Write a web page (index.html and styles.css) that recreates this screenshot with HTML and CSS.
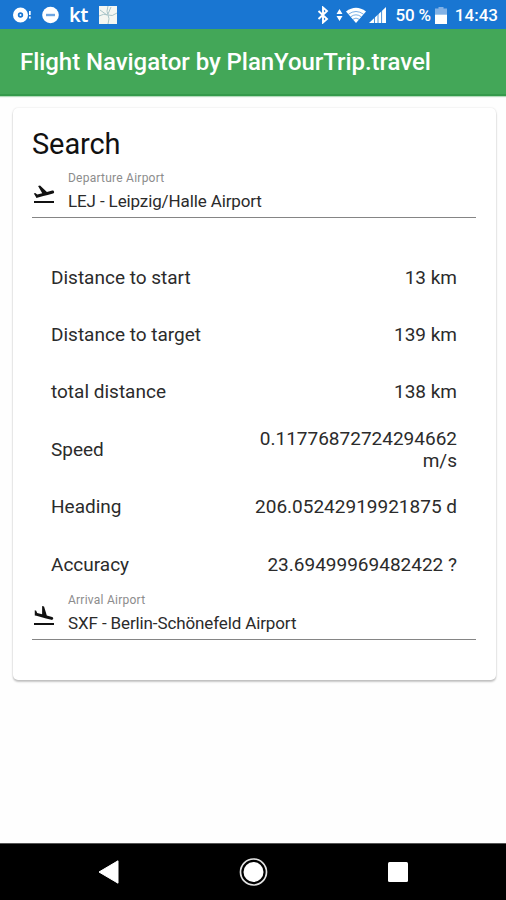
FILE: index.html
```html
<!DOCTYPE html>
<html lang="en">
<head>
  <meta charset="UTF-8" />
  <meta name="viewport" content="width=device-width, initial-scale=1" />
  <title>Flight Navigator</title>
  <link rel="stylesheet" href="styles.css">
</head>
<body>
  <div class="status-bar">
    <div class="status-left">
      <svg width="20" height="18" viewBox="0 0 20 18" fill="#fff">
        <path fill-rule="evenodd" d="M7.500 1.500a7.500 7.500 0 1 0 0 15a7.500 7.500 0 1 0 0-15zM7.500 6.300a2.700 2.700 0 1 1 0 5.400a2.700 2.700 0 1 1 0-5.400z" />
        <circle cx="7.500" cy="9" r="1" />
        <path d="M16 5h1.700v4H16zM16 10.500h1.700v2H16z" />
      </svg>
      <svg width="18" height="18" viewBox="0 0 18 18">
        <circle cx="8.500" cy="9" r="8.300" fill="#fff" />
        <path d="M4 9h9" stroke="#6ea6e2" stroke-width="2.400" />
      </svg>
      <span class="kt">kt</span>
      <svg width="18" height="18" viewBox="0 0 18 18">
        <path d="M0 0h18v18H0z" fill="#f4f6f2" />
        <path d="M0 10q5-3 9-1t9-2M9 0q-2 6 0 9t0 9M12 1l-3 7M1 4l7 5" fill="none" stroke="#a8c4c8" stroke-width="1" />
      </svg>
    </div>
    <div class="status-right">
      <svg width="12" height="18" viewBox="0 0 12 18" fill="none" stroke="#fff" stroke-width="1.900">
        <path d="M1.500 5l8.500 8-4 3.500v-15L10 5l-8.500 8" />
      </svg>
      <svg class="arrows" width="7" height="14" viewBox="0 0 7 14" fill="#fff">
        <path d="M3.500 1L6.500 6h-6zM3.500 13L.5 8h6z" />
      </svg>
      <svg class="wifi" width="20" height="17" viewBox="0 0 20 17">
        <path d="M10 16L0 4.500Q10-3 20 4.500z" fill="#fff" />
        <path d="M2.500 7.200q7.500-5.400 15 0M4.700 9.800q5.300-4 10.600 0M6.800 12.300q3.200-2.400 6.400 0" fill="none" stroke="#1976d2" stroke-width=".6" />
      </svg>
      <svg class="signal" width="17" height="16" viewBox="0 0 17 16">
        <path d="M0 16L17 0v16z" fill="#fff" />
        <path d="M5.500 8v8M9 5v11M12.600 2v14" stroke="#1976d2" stroke-width=".8" />
      </svg>
      <span class="percent">50 %</span>
      <svg class="battery" width="12" height="17" viewBox="0 0 12 17">
        <path d="M3.500 0h5v1.500H12V7.500H0v-6h3.500z" fill="#82b1e5" />
        <path d="M0 7.500h12V17H0z" fill="#fff" />
      </svg>
      <span class="clock">14:43</span>
    </div>
  </div>

  <div class="toolbar">Flight Navigator by PlanYourTrip.travel</div>

  <div class="content">
    <div class="card">
      <h1>Search</h1>

      <div class="field">
        <svg class="field-icon" width="24" height="24" viewBox="0 0 24 24">
          <path d="M2 19h20v2H2zm20.070-9.360c-.21-.8-1.040-1.280-1.840-1.060L14.920 10l-6.900-6.430-1.930.51 4.140 7.170-4.970 1.330-1.970-1.540-1.450.39 1.820 3.160.77 1.330 1.600-.43 5.310-1.420 4.350-1.160L21 11.490c.81-.23 1.280-1.050 1.070-1.850z" />
        </svg>
        <div class="field-text">
          <div class="field-label">Departure Airport</div>
          <div class="field-value">LEJ - Leipzig/Halle Airport</div>
        </div>
      </div>

      <div class="list">
        <div class="row"><span>Distance to start</span><span class="value">13 km</span></div>
        <div class="row"><span>Distance to target</span><span class="value">139 km</span></div>
        <div class="row"><span>total distance</span><span class="value">138 km</span></div>
        <div class="row"><span>Speed</span><span class="value">0.11776872724294662 m/s</span></div>
        <div class="row"><span>Heading</span><span class="value">206.05242919921875 d</span></div>
        <div class="row"><span>Accuracy</span><span class="value">23.69499969482422 ?</span></div>
      </div>

      <div class="field">
        <svg class="field-icon" width="24" height="24" viewBox="0 0 24 24">
          <path d="M2 19h20v2H2zm7.680-5.730l4.350 1.160 5.310 1.420c.8.210 1.620-.26 1.840-1.060.21-.8-.26-1.620-1.060-1.840l-5.310-1.420-2.760-9.020L10.120 2v8.280L5.150 8.950l-.93-2.320-1.450-.39v5.170l1.600.43 5.310 1.430z" />
        </svg>
        <div class="field-text">
          <div class="field-label">Arrival Airport</div>
          <div class="field-value">SXF - Berlin-Schönefeld Airport</div>
        </div>
      </div>
    </div>
  </div>

  <div class="nav-bar">
    <svg width="22" height="24" viewBox="0 0 22 24" fill="#fff">
      <path d="M20 .8v22.400L1 12z" stroke="#fff" stroke-linejoin="round" />
    </svg>
    <svg width="30" height="30" viewBox="0 0 30 30">
      <circle cx="14.500" cy="15" r="13" fill="none" stroke="#e4e4e4" stroke-width="1.700" />
      <circle cx="14.500" cy="15" r="10" fill="#fff" />
    </svg>
    <svg width="20" height="20" viewBox="0 0 20 20">
      <rect width="20" height="20" rx="1.500" fill="#fff" />
    </svg>
  </div>
</body>
</html>
```
FILE: styles.css
```css
:root {
  --status-color: #1976d2;
  --toolbar-color: #43a758;
  --text-color: #2b2b2b;
  --label-color: #8c8c8c;
}

* {
  box-sizing: border-box;
}

body {
  margin: 0;
  height: 900px;
  display: flex;
  flex-direction: column;
  background: #fefefe;
  color: var(--text-color);
  font-family: Roboto, sans-serif;
  overflow: hidden;
}

svg {
  display: block;
  flex: none;
}

.status-bar {
  height: 29px;
  flex: none;
  display: flex;
  justify-content: space-between;
  align-items: center;
  padding: 1px 8px 0 13px;
  background: var(--status-color);
  color: #fff;
}

.status-left,
.status-right {
  display: flex;
  align-items: center;
}

.status-left {
  gap: 9px;
}

.kt {
  width: 21px;
  font-family: "Noto Sans", sans-serif;
  font-size: 20px;
  font-weight: 600;
  line-height: 26px;
  letter-spacing: -0.5px;
}

.status-right {
  font-size: 17px;
  font-weight: 500;
}

.arrows {
  margin-left: 7px;
}

.wifi {
  margin-left: 3px;
}

.signal {
  margin-left: 3px;
}

.percent {
  margin-left: 10px;
  letter-spacing: -0.2px;
}

.battery {
  margin-left: 4px;
}

.clock {
  margin-left: 8px;
}

.toolbar {
  height: 67px;
  flex: none;
  padding-left: 20px;
  background: var(--toolbar-color);
  border-bottom: 2px solid #359a4b;
  box-shadow: 0 1px 1px rgba(67, 167, 88, 0.4);
  color: #fff;
  font-size: 24px;
  font-weight: 500;
  line-height: 66px;
  letter-spacing: -0.05px;
  white-space: nowrap;
}

.content {
  flex: 1;
  padding: 12px 10px 0 13px;
}

.card {
  height: 572px;
  padding: 19px 20px 0 19px;
  border-radius: 5px;
  background: #fff;
  box-shadow: 0 2px 2px rgba(0, 0, 0, 0.22), 0 0 2px rgba(0, 0, 0, 0.14);
}

h1 {
  margin: 0;
  height: 43px;
  color: #111;
  font-size: 29px;
  font-weight: 400;
  line-height: 34px;
  letter-spacing: -0.1px;
}

.field {
  height: 48px;
  display: flex;
  border-bottom: 1px solid #858585;
}

.field-icon {
  margin: 12px 12px 0 0;
  fill: #111;
}

.field-label {
  height: 15px;
  color: var(--label-color);
  font-size: 12px;
  line-height: 16px;
  letter-spacing: 0.24px;
}

.field-value {
  font-size: 17px;
  line-height: 32px;
  letter-spacing: -0.12px;
  white-space: nowrap;
}

.list {
  padding: 31px 19px 0 19px;
  margin-bottom: -1px;
}

.row {
  height: 57.4px;
  display: flex;
  justify-content: space-between;
  align-items: center;
  font-size: 19px;
  line-height: 22px;
}

.value {
  max-width: 215px;
  text-align: right;
}

.nav-bar {
  height: 57px;
  flex: none;
  display: flex;
  justify-content: space-between;
  align-items: center;
  padding: 0 98px;
  background: #000;
  border-top: 1px solid #555;
}
```
